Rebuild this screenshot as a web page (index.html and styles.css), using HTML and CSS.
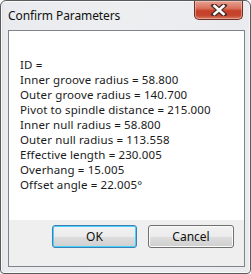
FILE: index.html
```html
<!DOCTYPE html>
<html>
<head>
<meta charset="utf-8">
<link rel="stylesheet" href="styles.css">
</head>
<body>
<div class="window">
  <div class="titlebar">
    <span class="title">Confirm Parameters</span>
    <div class="close">
      <svg width="18" height="12" viewBox="0 0 18 12">
        <path d="M4 1.5 L14 10.5 M14 1.5 L4 10.5" stroke="#4a2a24" stroke-width="5" stroke-linecap="square"/>
        <path d="M4.5 2 L13.5 10 M13.5 2 L4.5 10" stroke="#ffffff" stroke-width="2.6" stroke-linecap="square"/>
      </svg>
    </div>
  </div>
  <div class="client">
    <div class="content">
      <div class="line">ID =</div>
      <div class="line">Inner groove radius = 58.800</div>
      <div class="line">Outer groove radius = 140.700</div>
      <div class="line">Pivot to spindle distance = 215.000</div>
      <div class="line">Inner null radius = 58.800</div>
      <div class="line">Outer null radius = 113.558</div>
      <div class="line">Effective length = 230.005</div>
      <div class="line">Overhang = 15.005</div>
      <div class="line">Offset angle = 22.005°</div>
    </div>
    <div class="footer">
      <button class="btn default">OK</button>
      <button class="btn">Cancel</button>
    </div>
  </div>
</div>
</body>
</html>
```
FILE: styles.css
```css
html, body {
  margin: 0;
  padding: 0;
  background: #ffffff;
}
.window {
  box-sizing: border-box;
  width: 251px;
  height: 274px;
  border: 1px solid #5a5a5a;
  border-radius: 6px 6px 4px 4px;
  background: linear-gradient(to right, #d6d9dd 0px, #e9ebee 3px, #eceef0 50%, #e9ebee 100%);
  padding: 0 5px 6px 7px;
  display: flex;
  flex-direction: column;
  font-family: "Noto Sans", "Open Sans", sans-serif;
  box-shadow: inset 0 0 0 1px #f8f9fa;
}
.titlebar {
  height: 29px;
  display: flex;
  align-items: flex-start;
  justify-content: space-between;
}
.title {
  font-size: 12px;
  color: #111;
  margin-top: 6px;
  letter-spacing: -0.1px;
}
.close {
  width: 49px;
  height: 19px;
  margin-right: 2px;
  box-sizing: border-box;
  border: 1px solid #6e2f25;
  border-top: none;
  border-radius: 0 0 5px 5px;
  background: linear-gradient(to bottom, #e6a192 0%, #d9735d 40%, #c63f29 55%, #c5452e 80%, #d67a64 100%);
  display: flex;
  align-items: center;
  justify-content: center;
  box-shadow: inset 0 0 0 1px rgba(255,220,210,0.45);
}
.close svg {
  display: block;
}
.client {
  flex: 1;
  border: 1px solid #808389;
  background: #ffffff;
  display: flex;
  flex-direction: column;
}
.content {
  flex: 1;
  padding: 26px 0 0 11px;
  font-size: 11.5px;
  letter-spacing: 0.12px;
  color: #1a1a1a;
}
.line {
  height: 15px;
  line-height: 15px;
}
.footer {
  height: 41px;
  background: #efefef;
  display: flex;
  justify-content: flex-end;
  align-items: flex-start;
  gap: 11px;
  padding: 5px 10px 0 0;
}
.btn {
  box-sizing: border-box;
  width: 86px;
  height: 23px;
  border: 1px solid #707070;
  border-radius: 3px;
  background: linear-gradient(to bottom, #f2f2f2 0%, #ebebeb 50%, #dddddd 51%, #cfcfcf 100%);
  font-family: "Noto Sans", "Open Sans", sans-serif;
  font-size: 12px;
  color: #111;
  padding: 0;
  box-shadow: inset 0 0 0 1px #fbfbfb;
}
.btn.default {
  width: 85px;
  border-color: #3c7fb1;
  box-shadow: inset 0 0 0 1px #48d1ff;
}
```
